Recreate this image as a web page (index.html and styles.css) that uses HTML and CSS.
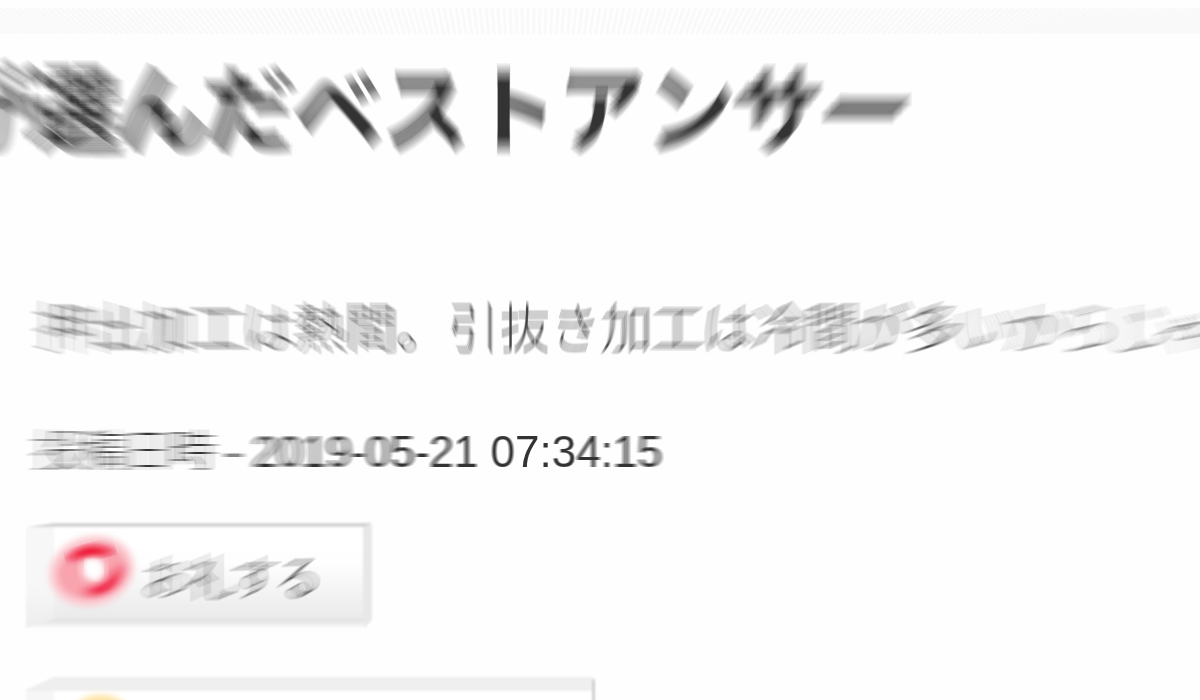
FILE: index.html
```html
<!DOCTYPE html>
<html lang="ja">
<head>
  <meta charset="UTF-8">
  <meta name="viewport" content="width=device-width, initial-scale=1.0">
  <title>ベストアンサー</title>
  <link rel="stylesheet" href="styles.css">
</head>
<body>

  <svg class="stripes" id="stripes" aria-hidden="true"></svg>

  <main class="answer">
    <h2 class="answer-title zoom-text">が選んだベストアンサー</h2>
    <p class="answer-body zoom-text">押出加工は熱間。引抜き加工は冷間が多いからじゃ</p>
    <p class="answer-date zoom-text">投稿日時 - 2019-05-21 07:34:15</p>

    <div class="actions">
      <button type="button" class="action thanks">
        <svg class="frame" viewBox="0 0 348 106" preserveAspectRatio="none" aria-hidden="true">
          <defs>
            <linearGradient id="face" x1="0" y1="0" x2="0" y2="1">
              <stop offset="0" stop-color="#fff"/>
              <stop offset=".4" stop-color="#fefefe"/>
              <stop offset="1" stop-color="#e9e9e9"/>
            </linearGradient>
            <linearGradient id="base" x1="0" y1="0" x2="0" y2="1">
              <stop offset="0" stop-color="#dedede"/>
              <stop offset="1" stop-color="#fcfcfc"/>
            </linearGradient>
            <linearGradient id="side" x1="0" y1="0" x2="0" y2="1">
              <stop offset="0" stop-color="#f7f7f7"/>
              <stop offset=".6" stop-color="#f7f7f7"/>
              <stop offset="1" stop-color="#ededed"/>
            </linearGradient>
            <filter id="soft"><feGaussianBlur stdDeviation=".8"/></filter>
          </defs>
          <g filter="url(#soft)">
            <path d="M28 2H340V98H28z" fill="url(#face)"/>
            <path d="M1 4L29 1V97L1 105z" fill="url(#side)"/>
            <path d="M1 105L29 96H345L340 105z" fill="url(#base)"/>
            <path d="M338 4L347 1V97L340 104L338 98z" fill="#e8e8e8"/>
            <path d="M3 4L29 0H347L340 4z" fill="#d4d4d4"/>
          </g>
        </svg>
        <svg class="icon" viewBox="0 0 90 76" aria-hidden="true">
          <defs>
            <filter id="glow" x="-20%" y="-20%" width="140%" height="140%"><feGaussianBlur stdDeviation="3"/></filter>
            <filter id="tight" x="-30%" y="-80%" width="160%" height="260%"><feGaussianBlur stdDeviation="6 3"/></filter>
          </defs>
          <g transform="rotate(-15 45 38)">
            <ellipse cx="45" cy="37" rx="43" ry="35" fill="#fbccd2" filter="url(#glow)"/>
            <ellipse cx="45" cy="37" rx="35" ry="27" fill="#f8a3ae" filter="url(#glow)"/>
            <path d="M32 18Q48 10 64 22Q48 21 32 18z" fill="#ee0b2d" stroke="#ee0b2d" stroke-width="6" filter="url(#tight)"/>
            <path d="M34 54Q52 60 72 42Q66 60 46 60Q38 58 34 54z" fill="#ee1737" stroke="#ee1737" stroke-width="3" filter="url(#tight)"/>
          </g>
          <ellipse cx="46" cy="35" rx="10" ry="12" fill="#fff" filter="url(#tight)"/>
          <path d="M40 28L52 30L54 37L48 44L40 36z" fill="#fff" stroke="#fff" stroke-width="4" filter="url(#glow)"/>
        </svg>
        <span class="zoom-text">お礼する</span>
      </button>

      <button type="button" class="action share">
        <svg class="frame" viewBox="0 0 570 106" preserveAspectRatio="none" aria-hidden="true">
          <g filter="url(#soft)">
            <path d="M28 14H568V98H28z" fill="#fff"/>
            <path d="M1 13L29 0V98L1 105z" fill="#f6f6f6"/>
            <path d="M1 13L29 0H568V14H2z" fill="#efefef"/>
            <path d="M567 4L570 1V105H567z" fill="#cfcfcf"/>
          </g>
        </svg>
        <svg class="icon" viewBox="0 0 90 76" aria-hidden="true">
          <ellipse cx="54" cy="38" rx="34" ry="31" fill="#fde3a0" filter="url(#glow)"/>
        </svg>
      </button>
    </div>
  </main>

  <svg class="filters" aria-hidden="true"><defs id="zoomFilters"></defs></svg>

  <script src="script.js"></script>
</body>
</html>
```

FILE: styles.css
```css
/* Common styles */
body {
  margin: 0;
  height: 100vh;
  overflow: hidden;
  background-color: #fefefe;
  color: #333;
  font-family: "Liberation Sans", "Noto Sans CJK JP", sans-serif;
}

h2,
p {
  margin: 0;
}

/* Striped band along the top */
.stripes {
  display: block;
  width: 100%;
  height: 26px;
  margin-top: 8px;
}

.stripes line {
  stroke: #f9f9f9;
  stroke-width: 3;
}

/* Answer */
.answer {
  padding: 28px 0 0 38px;
}

.zoom-text {
  white-space: pre;
}

.zoom-text .char {
  display: inline-block;
}

.answer-title {
  margin-left: -96px;
  font-size: 88px;
  line-height: 100px;
  font-weight: bold;
}

.answer-body {
  margin: 138px 0 0 2px;
  color: #444;
  font-size: 51px;
  font-weight: 300;
  line-height: 60px;
}

.answer-date {
  margin-top: 62px;
  font-size: 44px;
  font-weight: 300;
  line-height: 60px;
}

/* Buttons */
.actions {
  display: flex;
  flex-direction: column;
  align-items: flex-start;
  gap: 48px;
  margin: 41px 0 0 -13px;
}

.action {
  position: relative;
  display: flex;
  align-items: center;
  gap: 8px;
  height: 106px;
  padding: 0 52px 0 22px;
  border: none;
  background: none;
  color: #444;
  font-family: inherit;
  font-size: 44px;
  font-weight: 300;
  line-height: 60px;
  cursor: pointer;
}

.share {
  width: 570px;
}

.frame {
  position: absolute;
  top: 0;
  left: 0;
  width: 100%;
  height: 100%;
  overflow: visible;
}

.icon {
  position: relative;
  flex: none;
  width: 90px;
  height: 76px;
  margin-bottom: 8px;
  overflow: visible;
}

.action span {
  position: relative;
}

.action .zoom-text {
  padding-top: 6px;
}

.filters {
  position: absolute;
  width: 0;
  height: 0;
}
```

FILE: script.js
```javascript
const SVG = "http://www.w3.org/2000/svg";
const focus = { x: 530, y: 450 };
const strength = 0.062;

// Stripes run towards the focus point
const stripes = document.getElementById("stripes");
for (let x = -30; x < window.innerWidth + 60; x += 6) {
  const line = document.createElementNS(SVG, "line");
  line.setAttribute("x1", x);
  line.setAttribute("y1", 0);
  line.setAttribute("x2", x - (x - focus.x) * strength);
  line.setAttribute("y2", 26);
  stripes.appendChild(line);
}

// Average of evenly spaced copies, about one per pixel of the shift
function createFilter(id, dx, dy) {
  const copies = Math.max(2, Math.ceil(Math.max(Math.abs(dx), Math.abs(dy))) + 1);
  let markup = "";
  for (let i = 0; i < copies; i++) {
    const t = i / (copies - 1) - 0.5;
    markup += `<feOffset in="SourceGraphic" dx="${Math.round(dx * t)}" dy="${Math.round(dy * t)}" result="o${i}"/>`;
    if (i > 0) {
      const before = i === 1 ? "o0" : "r" + (i - 1);
      const share = 1 / (i + 1);
      markup += `<feComposite in="${before}" in2="o${i}" operator="arithmetic" k1="0" k2="${1 - share}" k3="${share}" k4="0" result="r${i}"/>`;
    }
  }
  const filter = document.createElementNS(SVG, "filter");
  filter.setAttribute("id", id);
  filter.setAttribute("x", "-100%");
  filter.setAttribute("y", "-50%");
  filter.setAttribute("width", "300%");
  filter.setAttribute("height", "200%");
  filter.setAttribute("color-interpolation-filters", "sRGB");
  filter.innerHTML = markup;
  document.getElementById("zoomFilters").appendChild(filter);
}

// One filter per character, the shift grows with the distance
let count = 0;
document.querySelectorAll(".zoom-text").forEach(text => {
  const chars = Array.from(text.textContent);
  text.textContent = "";
  chars.forEach(value => {
    const char = document.createElement("span");
    char.className = "char";
    char.textContent = value;
    text.appendChild(char);
  });
  text.querySelectorAll(".char").forEach(char => {
    const box = char.getBoundingClientRect();
    const dx = (box.left + box.width / 2 - focus.x) * strength;
    const dy = (box.top + box.height / 2 - focus.y) * strength;
    const id = "zoom" + count++;
    createFilter(id, dx, dy);
    char.style.filter = `url(#${id})`;
  });
});
```
